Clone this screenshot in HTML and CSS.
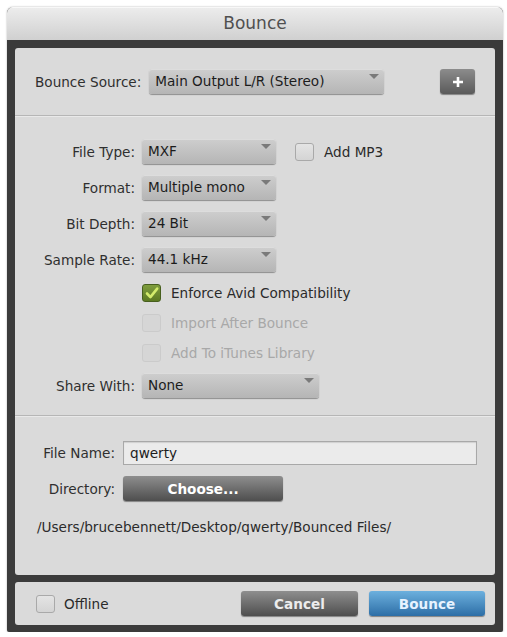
FILE: index.html
```html
<!DOCTYPE html>
<html>
  <head>
    <title>Bounce</title>
    <link rel="stylesheet" href="styles.css">
  </head>
  <body>
    <div class="window">
      <div class="titlebar">Bounce</div>
      <div class="frame">
        <div class="panel">
          <!-- source row -->
          <div class="section source">
            <div class="source-left">
              <span class="label">Bounce Source:</span>
              <div class="popup popup-source">Main Output L/R (Stereo)</div>
            </div>
            <button class="btn-plus" type="button">
              <svg width="12" height="12" viewBox="0 0 12 12"><path d="M6 1v10M1 6h10" stroke="#fff" stroke-width="2.6" fill="none"/></svg>
            </button>
          </div>

          <!-- format options -->
          <div class="section options">
            <span class="label">File Type:</span>
            <div class="cell">
              <div class="popup popup-short">MXF</div>
              <span class="check-item mp3"><span class="checkbox"></span>Add MP3</span>
            </div>
            <span class="label">Format:</span>
            <div class="popup popup-short">Multiple mono</div>
            <span class="label">Bit Depth:</span>
            <div class="popup popup-short">24 Bit</div>
            <span class="label">Sample Rate:</span>
            <div class="popup popup-short">44.1 kHz</div>
            <span class="check-item span2">
              <span class="checkbox checked">
                <svg width="18" height="18" viewBox="0 0 18 18"><path d="M4 9.5l3.4 3.6L14.2 4.6" stroke="#d3ec6c" stroke-width="2.6" fill="none" stroke-linecap="round" stroke-linejoin="round"/></svg>
              </span>Enforce Avid Compatibility
            </span>
            <span class="check-item span2 disabled"><span class="checkbox"></span>Import After Bounce</span>
            <span class="check-item span2 disabled"><span class="checkbox"></span>Add To iTunes Library</span>
            <span class="label">Share With:</span>
            <div class="popup popup-share">None</div>
          </div>

          <!-- file location -->
          <div class="section file">
            <div class="file-grid">
              <span class="label">File Name:</span>
              <div class="text-input">qwerty</div>
              <span class="label">Directory:</span>
              <button class="btn btn-choose" type="button">Choose...</button>
            </div>
            <div class="path">/Users/brucebennett/Desktop/qwerty/Bounced Files/</div>
          </div>
        </div>

        <div class="footer">
          <span class="check-item"><span class="checkbox"></span>Offline</span>
          <div class="actions">
            <button class="btn btn-cancel" type="button">Cancel</button>
            <button class="btn btn-bounce" type="button">Bounce</button>
          </div>
        </div>
      </div>
    </div>
  </body>
</html>
```

FILE: styles.css
```css
* {
  box-sizing: border-box;
}
body {
  margin: 0;
  background: #fff;
  font-family: "DejaVu Sans", sans-serif;
  font-size: 13.6px;
  color: #2a2a2a;
}
.window {
  margin: 7px 0 0 7px;
  width: 496px;
  height: 625px;
  background: #3b3b3b;
  border-radius: 6px 6px 2px 2px;
  box-shadow: 0 0 2px rgba(0, 0, 0, 0.35);
  display: flex;
  flex-direction: column;
  overflow: hidden;
}
.titlebar {
  height: 33px;
  line-height: 33px;
  text-align: center;
  font-size: 17px;
  color: #505050;
  background: linear-gradient(#ededed, #d0d0d0);
  box-shadow: inset 0 1px #f8f8f8;
}
.frame {
  flex: 1;
  padding: 8px 8px 7px;
  display: flex;
  flex-direction: column;
  gap: 7px;
}
.panel {
  flex: 1;
  background: #dadada;
  border-radius: 3px;
  display: flex;
  flex-direction: column;
}
.section {
  border-top: 1px solid #b6b6b6;
  box-shadow: inset 0 1px #e9e9e9;
}
.section.source {
  border-top: none;
  box-shadow: none;
  height: 67px;
  padding: 21px 20px 0;
  display: flex;
  justify-content: space-between;
  align-items: flex-start;
}
.source-left {
  display: flex;
  align-items: center;
  gap: 8px;
}
.label {
  color: #2f2f2f;
  white-space: nowrap;
}

/* popups */
.popup {
  position: relative;
  height: 25px;
  line-height: 25px;
  padding-left: 6px;
  border-radius: 3px;
  color: #1c1c1c;
  background: linear-gradient(#cecece, #b5b5b5);
  box-shadow: inset 0 1px #dddddd, 0 1px 1px rgba(0, 0, 0, 0.35);
}
.popup::after {
  content: "";
  position: absolute;
  right: 5px;
  top: 5px;
  border-left: 5px solid transparent;
  border-right: 5px solid transparent;
  border-top: 5px solid #7a7a7a;
}
.popup-source {
  width: 235px;
}
.popup-short {
  width: 134px;
}
.popup-share {
  width: 177px;
}
.btn-plus {
  width: 35px;
  height: 25px;
  border: none;
  border-radius: 3px;
  background: linear-gradient(#8c8c8c, #5a5a5a);
  box-shadow: 0 1px 1px rgba(0, 0, 0, 0.4);
  display: flex;
  align-items: center;
  justify-content: center;
  padding: 0;
}

/* options grid */
.section.options {
  height: 300px;
  padding-top: 23px;
  display: grid;
  grid-template-columns: 120px auto;
  column-gap: 7px;
  row-gap: 11px;
  align-content: start;
  align-items: center;
}
.options .label {
  text-align: right;
}
.cell {
  display: flex;
  align-items: center;
}
.span2 {
  grid-column: 2;
}
.check-item {
  display: flex;
  align-items: center;
  gap: 10px;
  height: 19px;
  white-space: nowrap;
}
.mp3 {
  margin-left: 19px;
}
.checkbox {
  width: 19px;
  height: 18px;
  border: 1px solid #a9a9a9;
  border-radius: 3px;
  background: linear-gradient(#e4e4e4, #d4d4d4);
  flex: none;
}
.checkbox.checked {
  border-color: #475f1e;
  background: linear-gradient(#7f9d3e, #5c7a22);
  display: flex;
  align-items: center;
  justify-content: center;
}
.checkbox svg {
  margin: -1px;
}
.disabled {
  color: #a8a8a8;
}
.disabled .checkbox {
  border-color: #cbcbcb;
  background: #d6d6d6;
}

/* file section */
.section.file {
  flex: 1;
  padding: 25px 0 0;
}
.file-grid {
  display: grid;
  grid-template-columns: 100px auto;
  column-gap: 8px;
  row-gap: 11px;
  align-items: center;
  justify-items: start;
}
.file-grid .label {
  justify-self: end;
}
.text-input {
  width: 354px;
  height: 24px;
  line-height: 22px;
  padding-left: 6px;
  border: 1px solid #a8a8a8;
  background: #ebebeb;
  box-shadow: inset 0 1px 1px rgba(0, 0, 0, 0.12);
  color: #1c1c1c;
}
.path {
  margin-top: 18px;
  padding-left: 22px;
  line-height: 16px;
  color: #2b2b2b;
  white-space: nowrap;
}

/* buttons */
.btn {
  height: 25px;
  border: none;
  border-radius: 3px;
  font-family: "DejaVu Sans", sans-serif;
  font-size: 13.6px;
  font-weight: bold;
  color: #fff;
  padding: 0;
  box-shadow: 0 1px 1px rgba(0, 0, 0, 0.4);
}
.btn-choose {
  width: 160px;
  background: linear-gradient(#8e8e8e, #4e4e4e);
}
.btn-cancel {
  width: 117px;
  color: #ececec;
  background: linear-gradient(#8e8e8e, #4e4e4e);
}
.btn-bounce {
  width: 116px;
  color: #e6f3ff;
  background: linear-gradient(#6cb0de, #2d6ea6);
}

/* footer */
.footer {
  height: 43px;
  background: #dadada;
  border-radius: 3px;
  display: flex;
  align-items: center;
  justify-content: space-between;
  padding: 0 10px 0 21px;
}
.footer .check-item {
  gap: 9px;
}
.actions {
  display: flex;
  gap: 11px;
}
```
